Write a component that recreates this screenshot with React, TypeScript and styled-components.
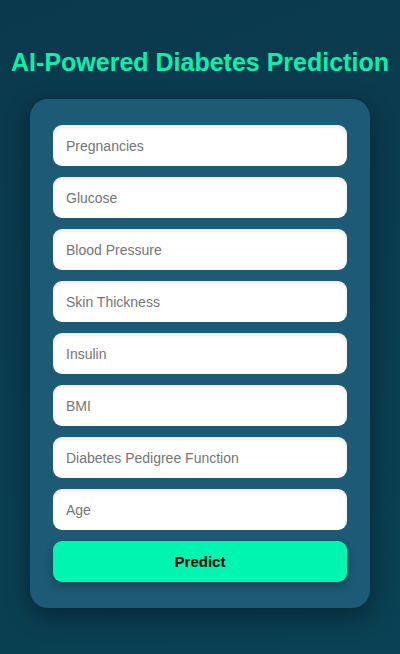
import React from "react";
import styled, { createGlobalStyle } from "styled-components";

const GlobalStyle = createGlobalStyle`
  * { box-sizing: border-box; }
  body {
    margin: 0;
    font-family: "Liberation Sans", Arial, sans-serif;
    background: #0a3a4d;
  }
`;

const Page = styled.main`
  min-height: 100vh;
  display: flex;
  flex-direction: column;
  align-items: center;
  padding: 47px 0 46px;
  background: linear-gradient(160deg, #0a394d, #0a4154);
`;

const Title = styled.h1`
  margin: 0 0 22px;
  font-size: 25px;
  line-height: 30px;
  font-weight: 700;
  color: #08f0ac;
  text-align: center;
  white-space: nowrap;
`;

const Form = styled.form`
  width: calc(100% - 60px);
  max-width: 480px;
  display: flex;
  flex-direction: column;
  gap: 11px;
  padding: 26px 23px;
  border-radius: 18px;
  background: #1d5a75;
  box-shadow: 0 8px 24px rgba(0, 0, 0, 0.4);
`;

const Field = styled.input`
  width: 100%;
  height: 41px;
  padding: 0 13px;
  border: none;
  border-radius: 9px;
  background: #fff;
  font-family: inherit;
  font-size: 14px;
  color: #222;
  box-shadow: inset 0 2px 4px rgba(0, 0, 0, 0.1);
  &::placeholder { color: #757575; opacity: 1; }
`;

const Submit = styled.button`
  width: 100%;
  height: 41px;
  border: none;
  border-radius: 9px;
  background: #00f5b0;
  font-family: inherit;
  font-size: 15px;
  font-weight: 700;
  color: #000;
  cursor: pointer;
  box-shadow: 0 4px 9px rgba(0, 0, 0, 0.25);
`;

const fields = [
  "Pregnancies",
  "Glucose",
  "Blood Pressure",
  "Skin Thickness",
  "Insulin",
  "BMI",
  "Diabetes Pedigree Function",
  "Age",
];

export default function App() {
  return (
    <>
      <GlobalStyle />
      <Page>
        <Title>AI-Powered Diabetes Prediction</Title>
        <Form onSubmit={(event: React.FormEvent) => event.preventDefault()}>
          {fields.map((name) => (
            <Field key={name} type="text" inputMode="decimal" placeholder={name} aria-label={name} />
          ))}
          <Submit type="submit">Predict</Submit>
        </Form>
      </Page>
    </>
  );
}
